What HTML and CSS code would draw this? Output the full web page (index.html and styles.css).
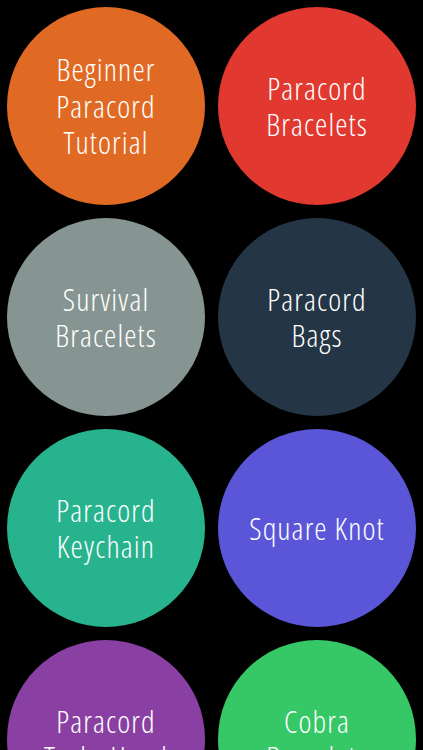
FILE: index.html
```html
<!DOCTYPE html>
<html>
<head>
<meta charset="utf-8">
<link rel="stylesheet" href="styles.css">
</head>
<body>
<div class="grid">
  <div class="circle orange"><span>Beginner<br>Paracord<br>Tutorial</span></div>
  <div class="circle red"><span>Paracord<br>Bracelets</span></div>
  <div class="circle gray"><span>Survival<br>Bracelets</span></div>
  <div class="circle navy"><span>Paracord<br>Bags</span></div>
  <div class="circle teal"><span>Paracord<br>Keychain</span></div>
  <div class="circle indigo"><span>Square Knot</span></div>
  <div class="circle purple"><span>Paracord<br>Turks Head</span></div>
  <div class="circle green"><span>Cobra<br>Bracelets</span></div>
</div>
</body>
</html>
```
FILE: styles.css
```css
html, body {
  margin: 0;
  padding: 0;
  background: #000;
  height: 100%;
  overflow: hidden;
}
.grid {
  display: grid;
  grid-template-columns: 198px 198px;
  grid-auto-rows: 198px;
  gap: 13px;
  padding: 7px;
}
.circle {
  border-radius: 50%;
  display: flex;
  align-items: center;
  justify-content: center;
  text-align: center;
  color: #fff;
  font-family: "Open Sans", sans-serif;
  font-stretch: 75%;
  font-weight: 300;
  font-size: 31px;
  letter-spacing: 1.1px;
  line-height: 36.5px;
}
.orange { background: #e06a24; }
.red { background: #e1382f; }
.gray { background: #869592; }
.navy { background: #243546; }
.teal { background: #27b38e; }
.indigo { background: #5a56d7; }
.purple { background: #8a3fa3; }
.green { background: #36c767; }
```
